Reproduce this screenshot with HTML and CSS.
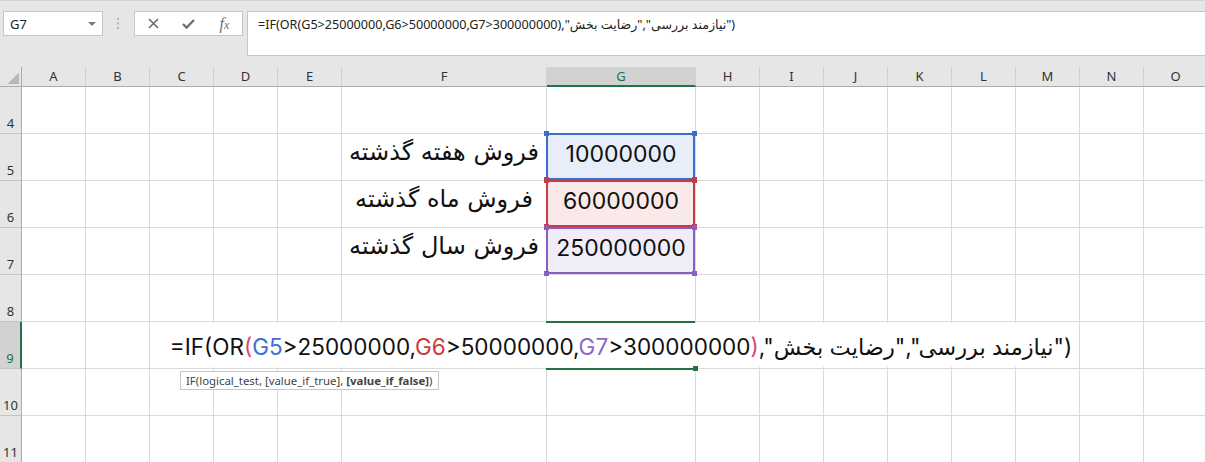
FILE: index.html
```html
<!DOCTYPE html>
<html lang="fa">
  <head>
    <meta charset="UTF-8" />
    <title>IF OR - Excel</title>
    <link rel="stylesheet" href="styles.css">
  </head>
  <body>
    <div class="toolbar">
      <div class="name-box">
        <span>G7</span>
        <svg class="caret" width="8" height="4" viewBox="0 0 8 4"><path d="M0 0h8L4 4z" fill="#7a7a7a"/></svg>
      </div>
      <div class="grip">
        <svg width="3" height="11" viewBox="0 0 3 11"><rect x="0" y="0" width="2" height="2" fill="#b3b3b3"/><rect x="0" y="4.5" width="2" height="2" fill="#b3b3b3"/><rect x="0" y="9" width="2" height="2" fill="#b3b3b3"/></svg>
      </div>
      <div class="fx-buttons">
        <span class="fx-slot">
          <svg width="11" height="11" viewBox="0 0 11 11"><path d="M1 1l9 9M10 1l-9 9" stroke="#6f6f6f" stroke-width="1.7"/></svg>
        </span>
        <span class="fx-slot">
          <svg width="13" height="10" viewBox="0 0 13 10"><path d="M1 5l3.6 3.6L12 1" fill="none" stroke="#6f6f6f" stroke-width="2.3"/></svg>
        </span>
        <span class="fx-slot fx-label">f<small>x</small></span>
      </div>
      <div class="formula-input" dir="ltr">=IF(OR(G5&gt;25000000,G6&gt;50000000,G7&gt;300000000),"<bdi>رضایت بخش</bdi>","<bdi>نیازمند بررسی</bdi>")</div>
    </div>

    <div class="sheet-wrap">
      <div class="sheet">
        <div class="corner"></div>
        <div class="ch">A</div><div class="ch">B</div><div class="ch">C</div><div class="ch">D</div><div class="ch">E</div>
        <div class="ch">F</div><div class="ch sel">G</div><div class="ch">H</div><div class="ch">I</div><div class="ch">J</div>
        <div class="ch">K</div><div class="ch">L</div><div class="ch">M</div><div class="ch">N</div><div class="ch">O</div>

        <div class="rh">4</div>
        <div></div><div></div><div></div><div></div><div></div><div></div><div></div>
        <div></div><div></div><div></div><div></div><div></div><div></div><div></div><div></div>

        <div class="rh">5</div>
        <div></div><div></div><div></div><div></div><div></div>
        <div class="label">فروش هفته گذشته</div>
        <div class="ref ref-blue">10000000</div>
        <div></div><div></div><div></div><div></div><div></div><div></div><div></div><div></div>

        <div class="rh">6</div>
        <div></div><div></div><div></div><div></div><div></div>
        <div class="label">فروش ماه گذشته</div>
        <div class="ref ref-red">60000000</div>
        <div></div><div></div><div></div><div></div><div></div><div></div><div></div><div></div>

        <div class="rh">7</div>
        <div></div><div></div><div></div><div></div><div></div>
        <div class="label">فروش سال گذشته</div>
        <div class="ref ref-purple">250000000</div>
        <div></div><div></div><div></div><div></div><div></div><div></div><div></div><div></div>

        <div class="rh">8</div>
        <div></div><div></div><div></div><div></div><div></div><div></div><div></div>
        <div></div><div></div><div></div><div></div><div></div><div></div><div></div><div></div>

        <div class="rh sel">9</div>
        <div></div><div></div><div></div><div></div><div></div><div></div>
        <div class="edit"></div>
        <div></div><div></div><div></div><div></div><div></div><div></div><div></div><div></div>

        <div class="rh">10</div>
        <div></div><div></div><div></div><div></div><div></div><div></div><div></div>
        <div></div><div></div><div></div><div></div><div></div><div></div><div></div><div></div>

        <div class="rh">11</div>
        <div></div><div></div><div></div><div></div><div></div><div></div><div></div>
        <div></div><div></div><div></div><div></div><div></div><div></div><div></div><div></div>
      </div>

      <!-- in-cell editor overflowing G9 -->
      <div class="edit-text" dir="ltr">=IF(OR<span class="paren">(</span><span class="c-blue">G5</span>&gt;25000000,<span class="c-red">G6</span>&gt;50000000,<span class="c-purple">G7</span>&gt;300000000<span class="paren">)</span>,"<bdi>رضایت بخش</bdi>","<bdi>نیازمند بررسی</bdi>")</div>
      <div class="fill-handle"></div>
      <div class="tip">IF(logical_test, [value_if_true], <b>[value_if_false]</b>)</div>
    </div>
  </body>
</html>
```

FILE: styles.css
```css
* {
  box-sizing: border-box;
}

html,
body {
  margin: 0;
  padding: 0;
}

body {
  width: 1205px;
  height: 462px;
  overflow: hidden;
  background: #ffffff;
  font-family: "Noto Sans", "DejaVu Sans", sans-serif;
  color: #222222;
}

/* Formula bar */
.toolbar {
  display: flex;
  align-items: flex-start;
  height: 67px;
  padding: 10px 0 0 3px;
  background: #e6e6e6;
  border-top: 1px solid #d4d4d4;
}

.name-box {
  display: flex;
  align-items: center;
  justify-content: space-between;
  width: 100px;
  height: 25px;
  padding: 0 6px 0 6px;
  background: #ffffff;
  border: 1px solid #c6c6c6;
  font-size: 13px;
  color: #222222;
}

.grip {
  display: flex;
  align-items: center;
  justify-content: center;
  width: 31px;
  height: 25px;
}

.fx-buttons {
  display: flex;
  align-items: center;
  width: 109px;
  height: 25px;
  padding-left: 1px;
  background: #ffffff;
  border: 1px solid #c6c6c6;
}

.fx-slot {
  display: flex;
  align-items: center;
  justify-content: center;
  width: 36px;
  height: 23px;
}

.fx-label {
  font-family: "Liberation Serif", serif;
  font-style: italic;
  font-size: 16px;
  color: #6f6f6f;
}

.fx-label small {
  font-size: 12px;
  margin-top: 3px;
}

.formula-input {
  flex: 1;
  height: 45px;
  margin-left: 4px;
  padding: 4px 10px;
  background: #ffffff;
  border: 1px solid #c6c6c6;
  border-right: none;
  font-size: 12.6px;
  line-height: 18px;
  white-space: nowrap;
  color: #222222;
}

/* Grid */
.sheet-wrap {
  position: relative;
}

.sheet {
  display: grid;
  grid-template-columns: 22px repeat(5, 64px) 205px 149px repeat(8, 64px);
  grid-template-rows: 20px repeat(8, 47px);
  width: 1208px;
}

.sheet > div {
  border-right: 1px solid #dadada;
  border-bottom: 1px solid #dadada;
}

.sheet > .corner {
  background: #e6e6e6 linear-gradient(to bottom right, transparent 50%, #b8b8b8 50%) no-repeat right 2px bottom 2px / 12px 11px;
  border-right: 1px solid #ababab;
  border-bottom: 1px solid #ababab;
}

.sheet > .ch {
  background: #e6e6e6;
  border-right: 1px solid #d0d0d0;
  border-bottom: 1px solid #ababab;
  font-size: 13px;
  line-height: 19px;
  text-align: center;
  color: #333333;
}

.sheet > .ch.sel {
  background: #d2d2d2;
  color: #217346;
  border-bottom: 2px solid #217346;
}

.sheet > .rh {
  display: flex;
  align-items: flex-end;
  justify-content: center;
  padding-bottom: 1px;
  background: #e6e6e6;
  border-right: 1px solid #ababab;
  border-bottom: 1px solid #c4c4c4;
  font-size: 13px;
  color: #333333;
}

.sheet > .rh.sel {
  background: #d2d2d2;
  color: #217346;
  border-right: 2px solid #217346;
}

.label {
  display: flex;
  align-items: center;
  justify-content: center;
  padding-bottom: 10px;
  direction: rtl;
  font-family: "DejaVu Sans", sans-serif;
  font-size: 24px;
  color: #111111;
}

.ref {
  position: relative;
  display: flex;
  align-items: center;
  justify-content: center;
  padding-bottom: 6px;
  font-family: "Inter", "DejaVu Sans", sans-serif;
  font-size: 23px;
  color: #111111;
}

.ref::before {
  content: "";
  position: absolute;
  top: -1px;
  left: -1px;
  right: 0;
  bottom: 0;
  border: 2px solid var(--ref);
}

.ref::after {
  content: "";
  position: absolute;
  top: -3px;
  left: -3px;
  right: -2px;
  bottom: -2px;
  background:
    linear-gradient(var(--ref), var(--ref)) left top / 5px 5px no-repeat,
    linear-gradient(var(--ref), var(--ref)) right top / 5px 5px no-repeat,
    linear-gradient(var(--ref), var(--ref)) left bottom / 5px 5px no-repeat,
    linear-gradient(var(--ref), var(--ref)) right bottom / 5px 5px no-repeat;
}

.ref-blue {
  --ref: #3a6fcb;
  background: #e8eef9;
}

.ref-red {
  --ref: #c43c44;
  background: #f9e9e9;
}

.ref-purple {
  --ref: #8a5dc4;
  background: #f1edf8;
}

.edit {
  position: relative;
}

.edit::before,
.edit::after {
  content: "";
  position: absolute;
  left: -1px;
  right: 0;
  height: 2px;
  background: #217346;
}

.edit::before {
  top: -1px;
}

.edit::after {
  bottom: -2px;
}

.edit-text {
  position: absolute;
  top: 256px;
  left: 621px;
  height: 44px;
  padding: 0 4px;
  transform: translateX(-50%);
  background: #ffffff;
  font-family: "Inter", "DejaVu Sans", sans-serif;
  font-size: 22.5px;
  line-height: 47px;
  white-space: nowrap;
  color: #111111;
}

.paren {
  color: #dc4572;
}

.c-blue {
  color: #3c70d0;
}

.c-red {
  color: #c93a40;
}

.c-purple {
  color: #9066c8;
}

.fill-handle {
  position: absolute;
  top: 299px;
  left: 693px;
  width: 5px;
  height: 5px;
  background: #217346;
}

.tip {
  position: absolute;
  top: 304px;
  left: 180px;
  height: 19px;
  padding: 0 5px;
  background: #ffffff;
  border: 1px solid #c6c6c6;
  font-size: 11.4px;
  line-height: 17px;
  color: #444444;
  white-space: nowrap;
}
```
